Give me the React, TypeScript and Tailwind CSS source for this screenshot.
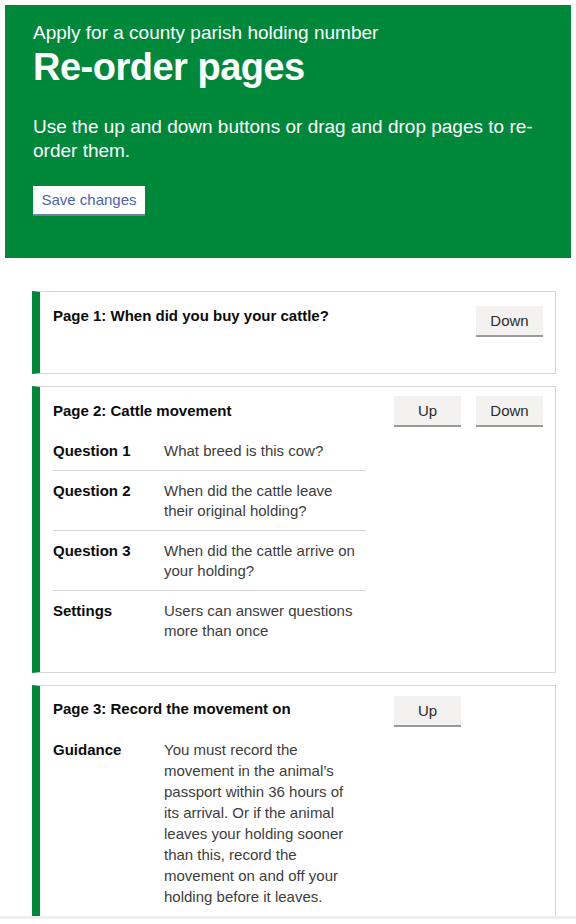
import React from "react";

const font = { fontFamily: '"Liberation Sans", Arial, sans-serif' };

function Btn({ label }: { label: string }) {
  return (
    <div className="w-[67px] h-[31px] bg-[#f3f2f1] border-b-2 border-[#9a9a9a] flex items-center justify-center text-[15px] text-[#2b2b2b]">
      {label}
    </div>
  );
}

function Row({ k, v, last }: { k: string; v: React.ReactNode; last?: boolean }) {
  return (
    <div className={"flex pt-[10px] " + (last ? "pb-[10px]" : "pb-[9px] border-b border-[#d4d4d4]")}>
      <div className="w-[111px] shrink-0 font-bold text-[#0b0c0c]">{k}</div>
      <div className="text-[#3d3d3d]">{v}</div>
    </div>
  );
}

export default function App() {
  return (
    <div className="w-[576px] h-[924px] overflow-hidden bg-white text-[15px] leading-[20px]" style={font}>
      <div className="h-[916px] overflow-hidden">
        <div className="px-[5px] pt-[5px]">
          <div className="bg-[#00883a] h-[253px] pl-[28px] pr-[20px] pt-[16px] text-white">
            <div className="text-[19px] leading-[24px]">Apply for a county parish holding number</div>
            <div className="text-[38px] leading-[44px] font-bold tracking-[-0.5px]">Re-order pages</div>
            <div className="text-[19px] leading-[24px] mt-[26px]">
              Use the up and down buttons or drag and drop pages to re-
              <br />
              order them.
            </div>
            <div className="mt-[23px] w-[112px] h-[30px] bg-white border-b-2 border-[#6f7fa8] flex items-center justify-center text-[15px] text-[#4c63b0]">
              Save changes
            </div>
          </div>
        </div>

        <div className="pl-[32px] pr-[20px] mt-[33px] flex flex-col gap-[12px]">
          <div className="border border-[#d6d6d6] border-l-[8px] border-l-[#00883a] pl-[13px] pr-[12px] pt-[14px] pb-[36px] flex justify-between">
            <div className="font-bold text-[#0b0c0c]">Page 1: When did you buy your cattle?</div>
            <Btn label="Down" />
          </div>

          <div className="border border-[#d6d6d6] border-l-[8px] border-l-[#00883a] pl-[13px] pr-[12px] pt-[14px] pb-[21px] flex justify-between">
            <div className="w-[313px]">
              <div className="font-bold text-[#0b0c0c] mb-[10px]">Page 2: Cattle movement</div>
              <Row k="Question 1" v="What breed is this cow?" />
              <Row k="Question 2" v={<>When did the cattle leave<br />their original holding?</>} />
              <Row k="Question 3" v={<>When did the cattle arrive on<br />your holding?</>} />
              <Row k="Settings" v={<>Users can answer questions<br />more than once</>} last />
            </div>
            <div className="flex gap-[15px] -mt-[5px]">
              <Btn label="Up" />
              <Btn label="Down" />
            </div>
          </div>

          <div className="border border-[#d6d6d6] border-l-[8px] border-l-[#00883a] pl-[13px] pr-[94px] pt-[13px] pb-[24px] flex justify-between">
            <div className="w-[313px]">
              <div className="font-bold text-[#0b0c0c] mb-[10px]">Page 3: Record the movement on</div>
              <div className="flex py-[10px] leading-[21px]">
                <div className="w-[111px] shrink-0 font-bold text-[#0b0c0c]">Guidance</div>
                <div className="text-[#3d3d3d]">
                  You must record the
                  <br />
                  movement in the animal’s
                  <br />
                  passport within 36 hours of
                  <br />
                  its arrival. Or if the animal
                  <br />
                  leaves your holding sooner
                  <br />
                  than this, record the
                  <br />
                  movement on and off your
                  <br />
                  holding before it leaves.
                </div>
              </div>
            </div>
            <div className="-mt-[3px]">
              <Btn label="Up" />
            </div>
          </div>
        </div>
      </div>
      <div className="h-[3px] bg-[#efefef]"></div>
    </div>
  );
}
